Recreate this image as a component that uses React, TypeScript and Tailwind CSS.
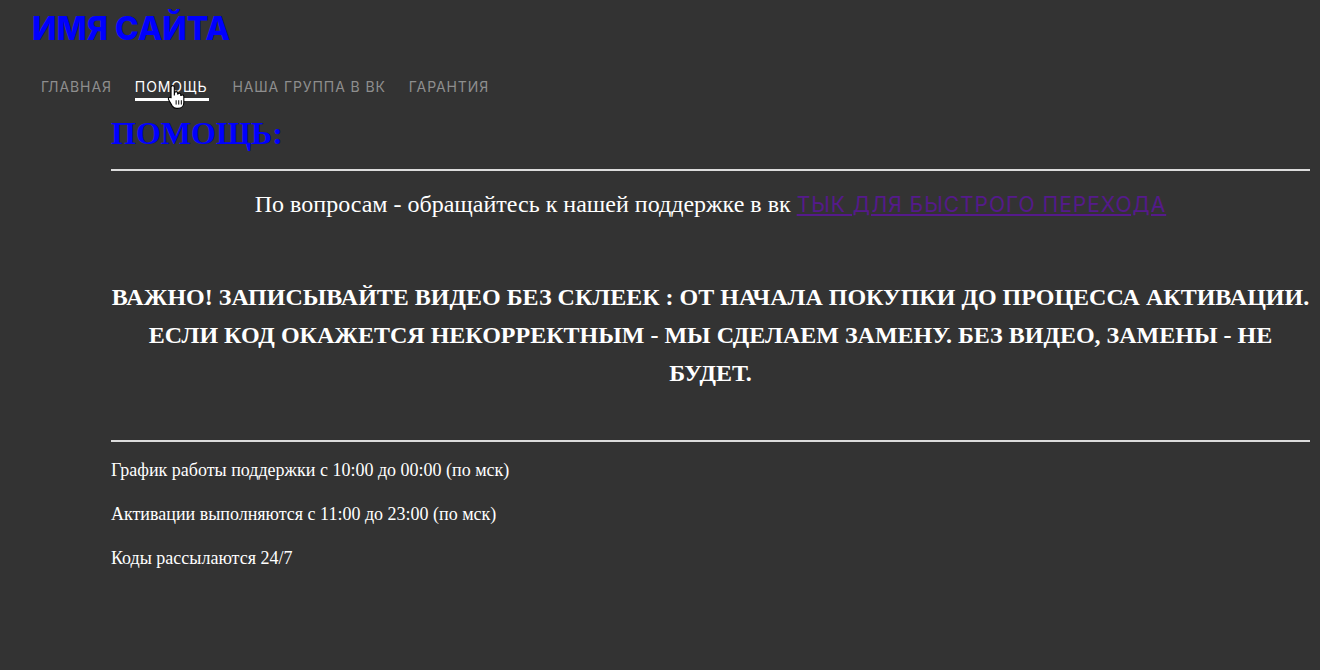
import React from 'react';

const navItems = ['Главная', 'Помощь', 'Наша группа в ВК', 'Гарантия'];

function HandCursor() {
  return (
    <svg
      width="20"
      height="26"
      viewBox="0 0 18 24"
      className="absolute left-[32px] top-[8px] pointer-events-none"
    >
      <path
        d="M5 1.5c.9 0 1.5.6 1.5 1.5v7.5l.2-2.2c.1-.8.7-1.3 1.5-1.3s1.4.6 1.4 1.4v1.3c.2-.7.8-1.1 1.5-1.1.8 0 1.4.6 1.4 1.4v1c.2-.6.8-1 1.4-1 .8 0 1.4.6 1.4 1.4v5.6c0 3.2-2.3 5.5-5.4 5.5H8.6c-1.7 0-3-.8-3.9-2.1L1.3 14.5c-.5-.7-.3-1.6.4-2 .6-.4 1.4-.3 1.9.3L3.5 13V3c0-.9.6-1.5 1.5-1.5z"
        fill="#fff"
        stroke="#000"
        strokeWidth="1"
      />
      <path d="M8.2 15v4M10.6 15v4M13 15v4" stroke="#000" strokeWidth="0.9" />
    </svg>
  );
}

export default function App() {
  return (
    <div className="min-h-[670px] bg-[#333333] font-['Liberation_Serif',serif] text-white">
      <header className="px-8 pt-[10px]">
        <h1 className="font-['Inter',sans-serif] text-[32px] font-extrabold leading-[38px] text-[#0000ff]">
          ИМЯ САЙТА
        </h1>
        <nav className="mt-[28px] flex gap-[23px] pl-[9px] font-['Inter',sans-serif] text-[14px] uppercase tracking-[0.9px]">
          {navItems.map((item) => (
            <a
              key={item}
              className={
                item === 'Помощь'
                  ? 'relative border-b-[3px] border-white pb-[1px] pr-[2px] text-white'
                  : 'pb-1 text-[#8e8e8e]'
              }
            >
              {item}
              {item === 'Помощь' && <HandCursor />}
            </a>
          ))}
        </nav>
      </header>

      <main className="ml-[111px] mr-[10px]">
        <h2 className="mt-[13px] text-[32px] font-bold leading-[38px] text-[#0000ff]">ПОМОЩЬ:</h2>
        <hr className="mt-[17px] border-t-2 border-[#dcdcdc]" />

        <p className="mt-[18px] text-center text-[24px] leading-[30px]">
          По вопросам - обращайтесь к нашей поддержке в вк{' '}
          <a className="font-['Inter',sans-serif] text-[21px] uppercase tracking-[1px] text-[#551a8b] underline">
            Тык для быстрого перехода
          </a>
        </p>

        <p className="mt-[58px] text-center text-[24px] font-bold leading-[38px]">
          ВАЖНО! ЗАПИСЫВАЙТЕ ВИДЕО БЕЗ СКЛЕЕК : ОТ НАЧАЛА ПОКУПКИ ДО ПРОЦЕССА АКТИВАЦИИ. ЕСЛИ КОД ОКАЖЕТСЯ
          НЕКОРРЕКТНЫМ - МЫ СДЕЛАЕМ ЗАМЕНУ. БЕЗ ВИДЕО, ЗАМЕНЫ - НЕ БУДЕТ.
        </p>

        <hr className="mt-[48px] border-t-2 border-[#dcdcdc]" />

        <div className="mt-[18px] flex flex-col gap-[23px] text-[18px] leading-[21px]">
          <p>График работы поддержки с 10:00 до 00:00 (по мск)</p>
          <p>Активации выполняются с 11:00 до 23:00 (по мск)</p>
          <p>Коды рассылаются 24/7</p>
        </div>
      </main>
    </div>
  );
}
